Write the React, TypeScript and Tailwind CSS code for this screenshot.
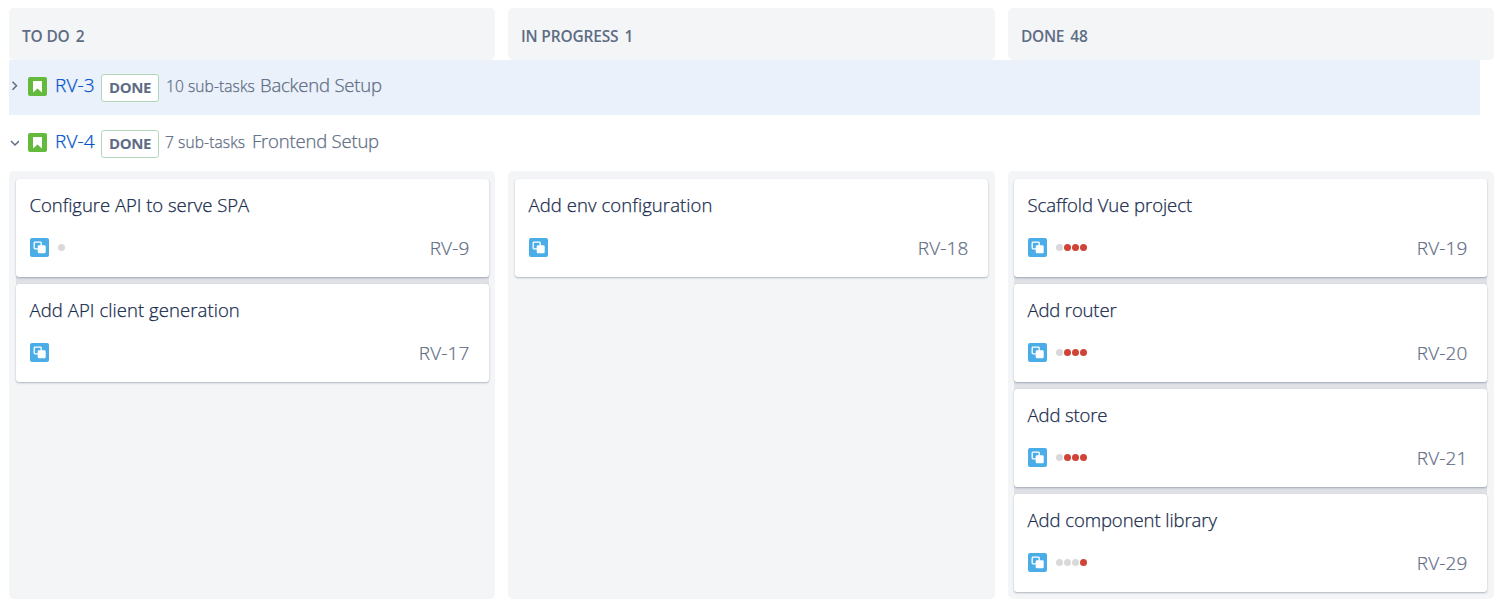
import React from "react";

type Issue = { title: string; id: string; dots: string; titleSpacing: string };

const columns: { name: string; count: string; issues: Issue[] }[] = [
  {
    name: "TO DO",
    count: "2",
    issues: [
      { title: "Configure API to serve SPA", id: "RV-9", dots: "g", titleSpacing: "tracking-[-0.03px]" },
      { title: "Add API client generation", id: "RV-17", dots: "", titleSpacing: "tracking-[0.07px]" },
    ],
  },
  {
    name: "IN PROGRESS",
    count: "1",
    issues: [{ title: "Add env configuration", id: "RV-18", dots: "", titleSpacing: "tracking-[0.08px]" }],
  },
  {
    name: "DONE",
    count: "48",
    issues: [
      { title: "Scaffold Vue project", id: "RV-19", dots: "grrr", titleSpacing: "tracking-[-0.05px]" },
      { title: "Add router", id: "RV-20", dots: "grrr", titleSpacing: "tracking-[-0.15px]" },
      { title: "Add store", id: "RV-21", dots: "grrr", titleSpacing: "tracking-[-0.12px]" },
      { title: "Add component library", id: "RV-29", dots: "gggr", titleSpacing: "tracking-[-0.07px]" },
    ],
  },
];

function StoryIcon() {
  return (
    <svg className="relative -top-px ml-[9px] size-[19px] shrink-0" viewBox="0 0 19 19">
      <rect width="19" height="19" rx="2" fill="#63ba3c" />
      <path d="M5.600 4h7.800c.4 0 .6.2.6.6v11l-4.500-4.200L5 15.600V4.600c0-.4.2-.6.6-.6z" fill="#fff" />
    </svg>
  );
}

function SubtaskIcon() {
  return (
    <svg className="relative -top-px size-[19px] shrink-0" viewBox="0 0 19 19">
      <rect width="19" height="19" rx="2" fill="#4bade8" />
      <rect x="4.200" y="4.200" width="7" height="6.600" rx="0.8" fill="none" stroke="#fff" strokeWidth="1.3" />
      <rect x="7.700" y="7.300" width="8" height="8" rx="1.300" fill="#fff" />
    </svg>
  );
}

function Swimlane(p: { open?: boolean; id: string; count: string; title: string }) {
  return (
    <div className={p.open ? "flex h-14 w-[1471px] pt-[14px]" : "flex h-[55px] w-[1471px] bg-[#eaf1fa] pt-[13px]"}>
      <div className="flex h-[26px] items-center whitespace-nowrap">
        <svg className="size-[10px] shrink-0" viewBox="0 0 10 10" fill="none" stroke="#5e6c84" strokeWidth="1.5">
          {p.open ? <path d="M2 4l4 4 4-4" /> : <path d="M3.500 .8l4 4-4 4" />}
        </svg>
        <span className="flex pt-[2px]"><StoryIcon /></span>
        <span className="mb-[2px] ml-[8px] w-[46px] text-[19px] font-light tracking-[0.15px] text-[#0052cc] [-webkit-text-stroke:0.25px_#0052cc]">{p.id}</span>
        <span className="mt-[3px] flex h-[28px] w-[58px] items-center justify-center rounded-[3px] border border-[#b2d8b9] bg-white text-[15px] font-bold tracking-[-0.4px] text-[#5e6c84]">
          DONE
        </span>
        <span className={p.open ? "mt-[2px] ml-[6px] w-[87px] text-[15.500px] font-light tracking-[0.12px] [-webkit-text-stroke:0.25px_#5e6c84]" : "mt-[2px] ml-[7px] w-[94px] text-[15.500px] font-light tracking-[0.1px] [-webkit-text-stroke:0.25px_#5e6c84]"}>{p.count}</span>
        <span className="mb-[2px] text-[18.500px] font-light tracking-[-0.2px] [-webkit-text-stroke:0.25px_#5e6c84]">{p.title}</span>
      </div>
    </div>
  );
}

function Card({ issue }: { issue: Issue }) {
  return (
    <article className="flex h-[98px] flex-col rounded-[3px] bg-white px-[13.500px] shadow-[0_1px_2px_rgba(9,30,66,0.3)]">
      <h3 className={"mt-[12px] h-[28px] text-[18.500px] leading-[28px] font-light whitespace-nowrap text-[#172b4d] [-webkit-text-stroke:0.25px_#172b4d] " + issue.titleSpacing}>{issue.title}</h3>
      <div className="mt-[15px] flex h-[28px] items-center pl-[0.500px]">
        <SubtaskIcon />
        <div className="relative -top-px ml-[9px] flex gap-[1px]">
          {issue.dots.split("").map((d, i) => (
            <i key={i} className={d === "r" ? "size-[7px] rounded-full bg-[#d04437]" : "size-[7px] rounded-full bg-[#d9d9d9]"} />
          ))}
        </div>
        <span className="mr-[6px] ml-auto text-[19px] font-light tracking-[0.15px] [-webkit-text-stroke:0.2px_#5e6c84]">{issue.id}</span>
      </div>
    </article>
  );
}

export default function App() {
  return (
    <main className="h-[607px] w-[1502px] overflow-hidden bg-white pt-[8px] pl-[9px] font-['Open_Sans','Noto_Sans',sans-serif] text-[#5e6c84]">
      <header className="grid w-[1485px] grid-cols-[486px_487px_486px] gap-x-[13px]">
        {columns.map((c) => (
          <h2 key={c.name} className="flex h-[52px] items-center gap-[6px] rounded-[5px] bg-[#f4f5f7] pt-[5px] pl-[13px] text-[15.500px] font-semibold">
            <span className={c.name === "DONE" ? "tracking-[-0.3px]" : "tracking-[-0.18px]"}>{c.name}</span>
            <span>{c.count}</span>
          </h2>
        ))}
      </header>
      <Swimlane id="RV-3" count="10 sub-tasks" title="Backend Setup" />
      <Swimlane open id="RV-4" count="7 sub-tasks" title="Frontend Setup" />
      <section className="grid h-[428px] w-[1485px] grid-cols-[486px_487px_486px] gap-x-[13px]">
        {columns.map((c) => (
          <div key={c.name} className={c.name === "DONE" ? "rounded-[5px] bg-[#f4f5f7] pt-[8px] pr-[7px] pl-[6px]" : c.name === "TO DO" ? "rounded-[5px] bg-[#f4f5f7] pt-[8px] pr-[6px] pl-[7px]" : "rounded-[5px] bg-[#f4f5f7] px-[7px] pt-[8px]"}>
            <div className="flex flex-col gap-[7px] rounded-[3px] bg-[#dfe1e6]">
              {c.issues.map((issue) => (
                <Card key={issue.id} issue={issue} />
              ))}
            </div>
          </div>
        ))}
      </section>
    </main>
  );
}
